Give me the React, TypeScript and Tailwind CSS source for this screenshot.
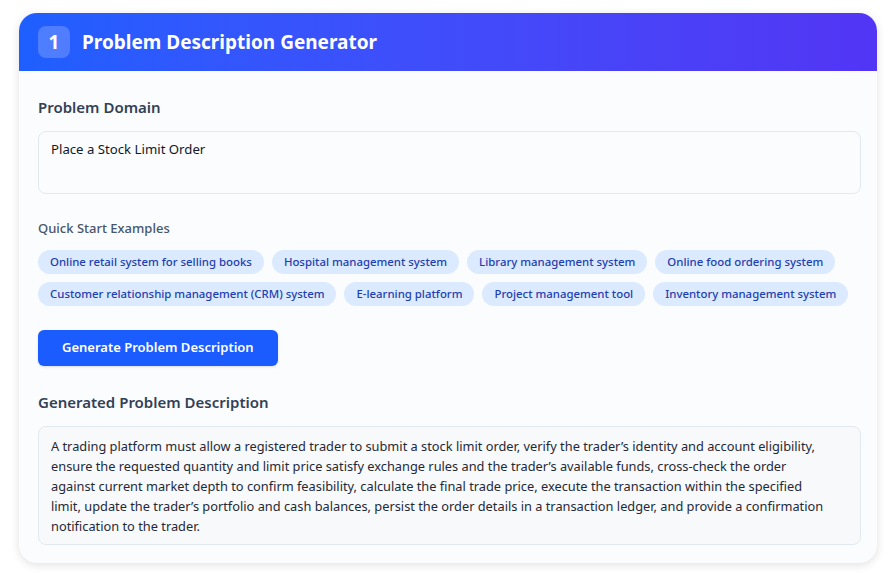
import React from "react";

const chipsRow = [
  "Online retail system for selling books",
  "Hospital management system",
  "Library management system",
  "Online food ordering system",
  "Customer relationship management (CRM) system",
  "E-learning platform",
  "Project management tool",
  "Inventory management system",
];

const descLines = [
  "A trading platform must allow a registered trader to submit a stock limit order, verify the trader’s identity and account eligibility,",
  "ensure the requested quantity and limit price satisfy exchange rules and the trader’s available funds, cross-check the order",
  "against current market depth to confirm feasibility, calculate the final trade price, execute the transaction within the specified",
  "limit, update the trader’s portfolio and cash balances, persist the order details in a transaction ledger, and provide a confirmation",
  "notification to the trader.",
];

export default function App() {
  return (
    <div
      className="min-h-[577px] w-[896px] bg-white pt-[13px] pl-[19px]"
      style={{ fontFamily: '"Segoe UI", "Noto Sans", sans-serif' }}
    >
      <div className="w-[858px] overflow-hidden rounded-[18px] bg-[#fbfcfe] shadow-[0_2px_10px_rgba(0,0,0,0.12)]">
        <div className="flex h-[58px] items-center gap-3 bg-gradient-to-r from-[#1e5fff] to-[#5235f5] pl-[19px]">
          <div className="flex h-8 w-8 items-center justify-center rounded-lg bg-white/20 text-[19px] font-bold text-white">
            1
          </div>
          <div className="text-[19px] font-bold text-white">Problem Description Generator</div>
        </div>
        <div className="pl-[19px] pr-[16px] pt-[25px] pb-[18px]">
          <div className="text-[15px] font-semibold text-[#334155]">Problem Domain</div>
          <div className="mt-[12px] h-[63px] rounded-lg border border-[#e2e8f0] bg-[#fbfcfe] px-3 pt-[8px] text-[13.2px] text-[#111827]">
            Place a Stock Limit Order
          </div>
          <div className="mt-[25px] text-[13px] font-medium text-[#475569]">Quick Start Examples</div>
          <div className="mt-[12px] flex flex-wrap gap-2">
            {chipsRow.map((c) => (
              <span
                key={c}
                className="flex h-6 items-center rounded-full bg-[#dbeafe] px-3 text-[11.4px] font-medium text-[#1e40af]"
              >
                {c}
              </span>
            ))}
          </div>
          <button className="mt-6 flex h-9 items-center rounded-md bg-[#1a5cff] px-6 text-[13px] font-semibold text-white shadow-sm">
            Generate Problem Description
          </button>
          <div className="mt-[25px] text-[15px] font-semibold text-[#334155]">Generated Problem Description</div>
          <div className="mt-[12px] rounded-lg border border-[#e2e8f0] bg-[#f8f9fb] px-3 pt-[9px] pb-[8px] text-[12.8px] leading-5 text-[#1f2937]">
            {descLines.map((l, i) => (
              <span key={i} className="block whitespace-nowrap">
                {l}
              </span>
            ))}
          </div>
        </div>
      </div>
    </div>
  );
}
